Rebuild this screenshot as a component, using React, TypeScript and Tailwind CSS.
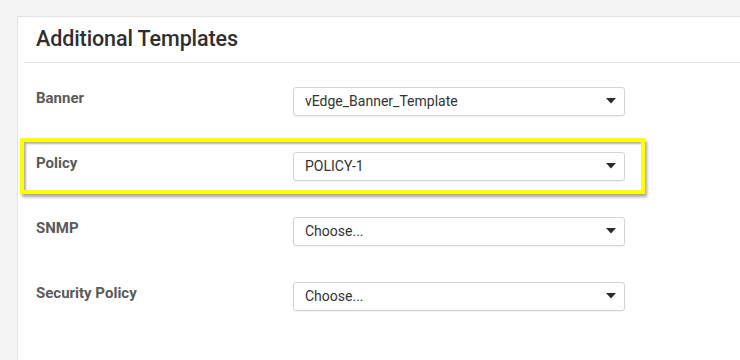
import React from 'react';

interface TemplateRow {
  label: string;
  value: string;
  highlight?: boolean;
}

const rows: TemplateRow[] = [
  { label: 'Banner', value: 'vEdge_Banner_Template' },
  { label: 'Policy', value: 'POLICY-1', highlight: true },
  { label: 'SNMP', value: 'Choose...' },
  { label: 'Security Policy', value: 'Choose...' },
];

const CaretDown = () => (
  <svg width="10" height="6" viewBox="0 0 10 6" className="shrink-0">
    <path d="M0 0 L10 0 L5 5.5 Z" fill="#2b2b2b" />
  </svg>
);

const SelectBox = ({ value }: { value: string }) => (
  <div className="flex items-center justify-between w-[332px] h-[29px] pl-[11px] pr-[8px] border border-[#d4d4d4] rounded-[3px] bg-white shadow-[0_1px_1px_rgba(0,0,0,0.05)]">
    <span className="text-[14px] text-[#333] font-['Roboto',sans-serif]">{value}</span>
    <CaretDown />
  </div>
);

export default function App() {
  return (
    <div className="w-[740px] h-[360px] overflow-hidden bg-[#f4f4f4] pl-[17px] pt-[16px] flex font-['Roboto',sans-serif]">
      <div className="flex-1 bg-white border-l border-t border-[#e2e2e2] flex flex-col">
        <div className="h-[45px] flex items-center pl-[18px]">
          <h2 className="text-[21.5px] font-medium text-[#2f2f2f] tracking-[-0.1px]">Additional Templates</h2>
        </div>
        <div className="ml-[6px] border-b border-[#e2e2e2]"></div>

        <div className="flex flex-col gap-[9px] pt-[10px] pl-[2px]">
          {rows.map((row) => (
            <div
              key={row.label}
              className={`w-[625px] h-[56px] flex items-center pl-[12px] border-[4px] ${
                row.highlight
                  ? 'border-[#ffff00] shadow-[2px_3px_3px_rgba(0,0,0,0.35),inset_2px_2px_2px_rgba(0,0,0,0.3)]'
                  : 'border-transparent'
              }`}
            >
              <div className="w-[257px] mb-[5px] text-[15px] font-bold text-[#5a5a5a]">{row.label}</div>
              <SelectBox value={row.value} />
            </div>
          ))}
        </div>
      </div>
    </div>
  );
}
